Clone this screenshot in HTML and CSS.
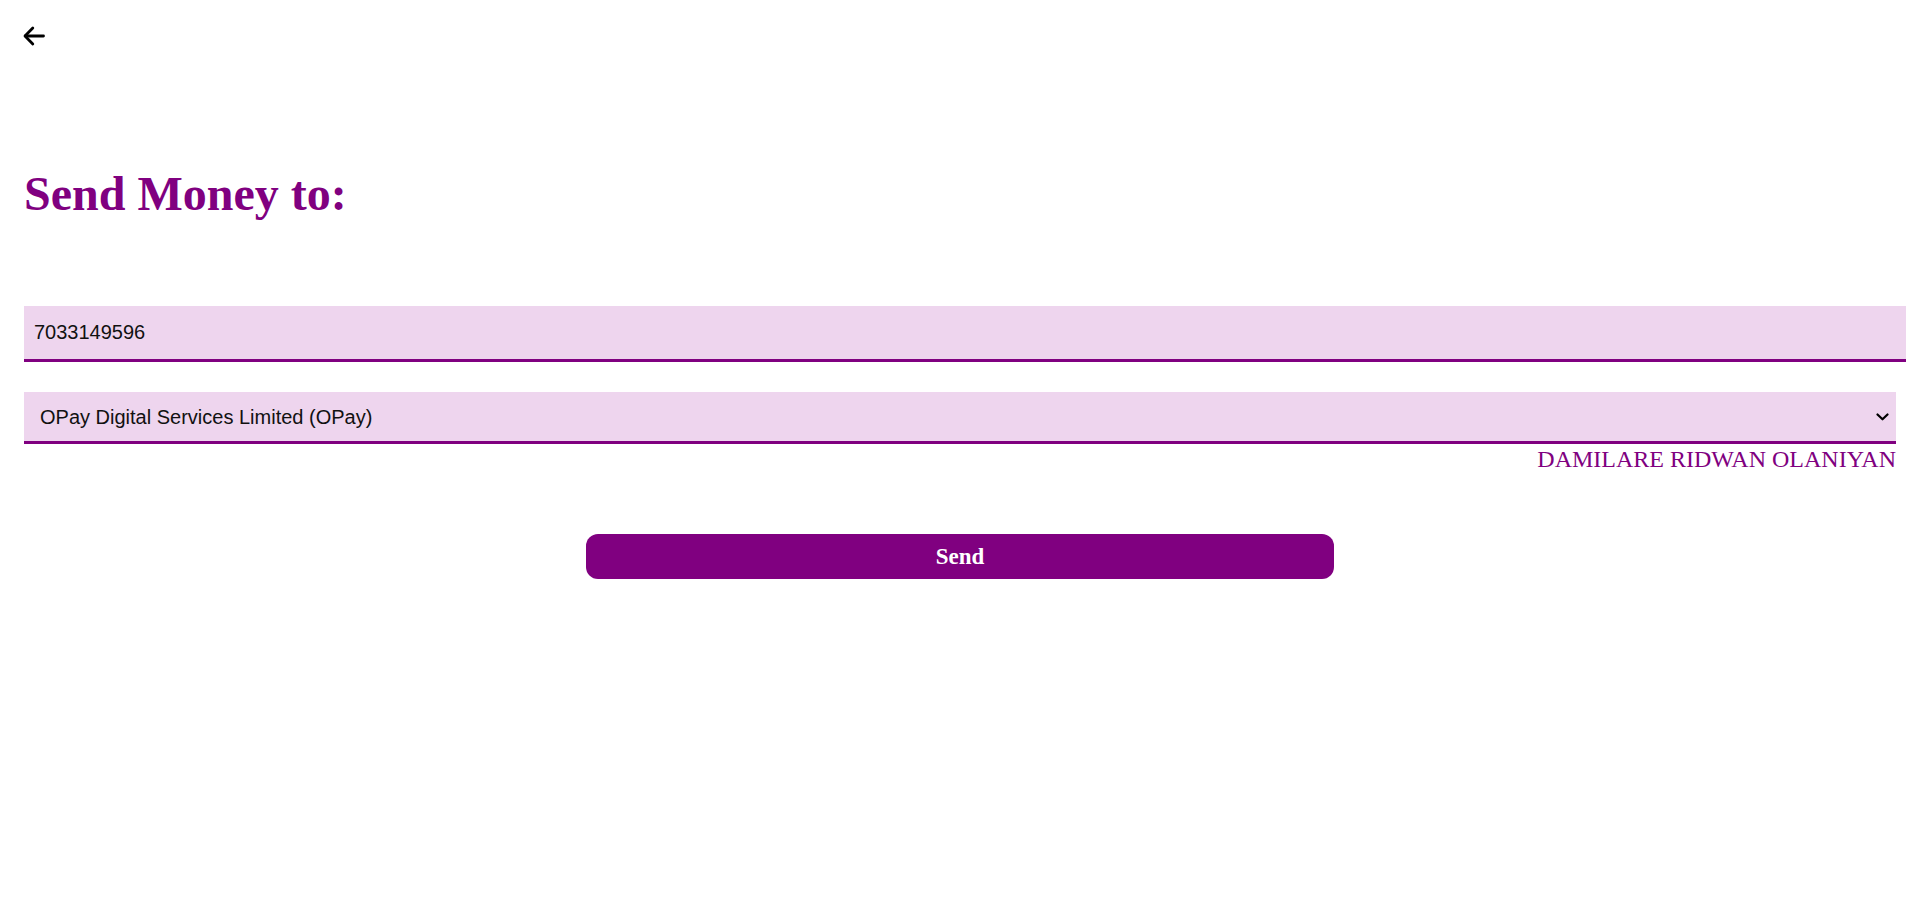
FILE: index.html
```html
<!DOCTYPE html>
<html lang="en">
<head>
<meta charset="utf-8">
<title>Send Money</title>
<link rel="stylesheet" href="styles.css">
</head>
<body>
<div class="page">
  <header class="topbar">
    <a class="back" href="#" aria-label="Back">
      <svg class="back-icon" width="22" height="20" viewBox="0 0 22 20" fill="none" stroke="#000" stroke-width="2.8" stroke-linecap="round" stroke-linejoin="round">
        <path d="M20.5 10H2.5"/>
        <path d="M9.8 2L2 10l7.8 8"/>
      </svg>
    </a>
  </header>
  <h1 class="title">Send Money to:</h1>
  <form class="form">
    <input class="field" type="text" value="7033149596">
    <div class="select-wrap">
      <select class="bank">
        <option>OPay Digital Services Limited (OPay)</option>
      </select>
      <svg class="chev" width="13" height="8" viewBox="0 0 13 8" fill="none" stroke="#000" stroke-width="2.2" stroke-linecap="round" stroke-linejoin="round">
        <path d="M1.5 1.5L6.5 6.3L11.5 1.5"/>
      </svg>
    </div>
    <div class="name">DAMILARE RIDWAN OLANIYAN</div>
    <button class="send" type="button">Send</button>
  </form>
</div>
</body>
</html>
```
FILE: styles.css
```css
html, body {
  margin: 0;
  padding: 0;
  background: #ffffff;
}

body {
  font-family: "Liberation Serif", "Times New Roman", serif;
}

.page {
  padding: 0 24px;
}

.topbar {
  padding-top: 26px;
  height: 20px;
}

.back {
  display: inline-block;
  margin-left: -1px;
}

.back-icon {
  display: block;
}

.title {
  margin: 120px 0 84px;
  font-family: "Liberation Serif", "Times New Roman", serif;
  font-weight: bold;
  font-size: 48px;
  line-height: 56px;
  color: #800080;
}

.form {
  display: flex;
  flex-direction: column;
  margin: 0;
}

.field {
  box-sizing: content-box;
  width: 100%;
  height: 53px;
  margin: 0;
  padding: 0 0 0 10px;
  border: none;
  border-bottom: 3px solid #800080;
  background: #eed5ee;
  font-family: "Liberation Sans", Arial, sans-serif;
  font-size: 20px;
  color: #111111;
  outline: none;
}

.select-wrap {
  position: relative;
  margin-top: 30px;
}

.bank {
  display: block;
  box-sizing: border-box;
  width: 100%;
  height: 52px;
  margin: 0;
  padding: 0 0 0 16px;
  border: none;
  border-bottom: 3px solid #800080;
  border-radius: 0;
  background: #eed5ee;
  font-family: "Liberation Sans", Arial, sans-serif;
  font-size: 20px;
  color: #111111;
  appearance: none;
  -webkit-appearance: none;
  outline: none;
}

.chev {
  position: absolute;
  right: 7px;
  top: 21px;
  pointer-events: none;
}

.name {
  margin-top: 2px;
  text-align: right;
  font-family: "Liberation Serif", "Times New Roman", serif;
  font-size: 24px;
  line-height: 27px;
  color: #800080;
}

.send {
  align-self: center;
  width: 748px;
  height: 45px;
  margin-top: 61px;
  border: none;
  border-radius: 12px;
  background: #800080;
  color: #ffffff;
  font-family: "Liberation Serif", "Times New Roman", serif;
  font-weight: bold;
  font-size: 23px;
  cursor: pointer;
}
```
